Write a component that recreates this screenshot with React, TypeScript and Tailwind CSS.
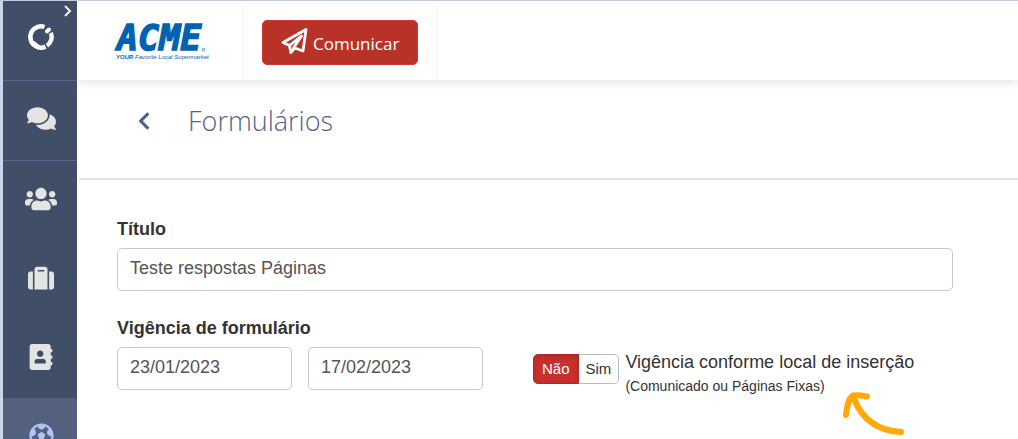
import {useState} from "react";
import {FaAddressBook, FaChevronLeft, FaComments, FaFutbol, FaSuitcase, FaUsers} from "react-icons/fa";

const menu = [
    {label: "Conversas", icon: FaComments, size: 29, style: "h-20 border-b border-[#566889] text-[#e4e4e4]"},
    {label: "Grupos", icon: FaUsers, size: 32, style: "h-[79px] text-[#e4e4e4]"},
    {label: "Viagens", icon: FaSuitcase, size: 26, style: "h-[79px] text-[#e4e4e4]"},
    {label: "Contatos", icon: FaAddressBook, size: 26, style: "h-[79px] text-[#e4e4e4]"},
    {label: "Esportes", icon: FaFutbol, size: 25, style: "h-[79px] bg-[#53617f] text-[#afc5f5]"},
];

const inputStyle =
    "h-[43px] w-full rounded-[5px] border border-[#c8c8c8] bg-white px-3 pb-0.5 text-lg text-[#555] outline-none";

const BrandMark = () => (
    <svg width="26" height="26" viewBox="0 0 26 26" fill="none" stroke="#fff">
        <path d="M16.500 3A10.600 10.600 0 1 0 17.500 22.600" strokeWidth="4.500"/>
        <path d="M19 21.700A10.600 10.600 0 0 0 22.800 8.800" strokeWidth="4.300"/>
        <path d="M19 7.300l2-1.800" strokeWidth="4" strokeLinecap="round"/>
        <path d="M6.500 18v4.500h5.500z" fill="#fff" strokeWidth="1.200"/>
    </svg>
);

const AcmeLogo = () => (
    <svg
        className="overflow-visible"
        width="92"
        height="40"
        viewBox="0 0 92 40"
        fill="#0062b1"
        role="img"
        aria-label="ACME"
    >
        <text
            x="2"
            y="29"
            fontFamily="'DejaVu Sans Mono', monospace"
            fontSize="35"
            fontWeight="700"
            fontStyle="italic"
            stroke="#0062b1"
            strokeWidth="1.400"
        >
            ACME
        </text>
        <circle cx="88.500" cy="28.500" r="1.300" fill="none" stroke="#0062b1" strokeWidth="0.700"/>
        <text x="1" y="38" fontFamily="'Liberation Sans', sans-serif" fontSize="6" fontStyle="italic">
            <tspan fontWeight="700">YOUR</tspan> Favorite Local Supermarket
        </text>
    </svg>
);

const PaperPlane = () => (
    <svg
        width="28"
        height="28"
        viewBox="0 0 28 28"
        fill="none"
        stroke="#fff"
        strokeWidth="2.800"
        strokeLinejoin="round"
        strokeLinecap="round"
    >
        <path d="M25 2.500L2 15.500l6.500 3 1.300 7 4-4.500 8.200 3z"/>
        <path d="M8.500 18.500L20.500 9 12.500 21"/>
    </svg>
);

const CurvedArrow = () => (
    <svg width="64" height="46" viewBox="0 0 64 46" fill="none" stroke="#ffa80a" strokeWidth="6" strokeLinecap="round">
        <path d="M59 41C38 40 21 30 12 8"/>
        <path d="M4 24C5 15 6 8 11 4.500 15 3.500 20 4.500 25 5.500" strokeLinejoin="round"/>
    </svg>
);

const Sidebar = () => (
    <aside className="relative z-10 w-[77px] shrink-0 overflow-hidden border-l-3 border-[#cbd5e8] bg-[#414e67]">
        <div className="relative flex h-20 items-center justify-center border-b border-[#566889] pb-2 pl-0.5">
            <a href="#inicio" aria-label="Início">
                <BrandMark/>
            </a>
            <button aria-label="Expandir menu" className="absolute right-1 top-1">
                <svg width="10" height="12" viewBox="0 0 10 12" fill="none" stroke="#f1f1f1" strokeWidth="2">
                    <path d="M2 1l5 5-5 5"/>
                </svg>
            </button>
        </div>
        <nav>
            {menu.map(({label, icon: Icon, size, style}) => (
                <a
                    key={label}
                    href="#menu"
                    aria-label={label}
                    className={`flex items-center justify-center pb-1 pl-0.5 ${style}`}
                >
                    <Icon size={size}/>
                </a>
            ))}
        </nav>
    </aside>
);

const Header = () => (
    <header className="flex h-[79px] shrink-0 shadow-[0_2px_10px_rgba(0,0,0,0.12)]">
        <div className="flex items-center border-r border-[#f5f5f5] pl-[38px] pr-[35px]">
            <AcmeLogo/>
        </div>
        <div className="flex items-center border-r border-[#f5f5f5] px-[19px]">
            <button className="mt-1 flex h-[45px] items-center gap-1 rounded-[5px] border border-[#d03a34] bg-[#b93228] px-[18px] text-[17px] text-white font-['Open_Sans',sans-serif]">
                <span className="pb-1">
                    <PaperPlane/>
                </span>
                <span className="pt-0.5">Comunicar</span>
            </button>
        </div>
    </header>
);

const App = () => {
    const [title, setTitle] = useState("Teste respostas Páginas");
    const [start, setStart] = useState("23/01/2023");
    const [end, setEnd] = useState("17/02/2023");
    const [followsPlace, setFollowsPlace] = useState(false);

    const optionStyle = (active: boolean) =>
        active
            ? "bg-[#c9302c] border-[#ac2925] text-white shadow-[inset_0_2px_5px_rgba(0,0,0,0.15)]"
            : "bg-white border-[#bbb] text-[#333]";

    return (
        <div className="flex h-screen overflow-hidden border-t border-[#c3cce0] bg-white font-['Liberation_Sans',Arial,sans-serif] text-[#333]">
            <Sidebar/>
            <div className="flex min-w-0 flex-1 flex-col">
                <Header/>
                <div className="ml-0.5 flex h-[100px] shrink-0 items-center gap-[34px] border-b-2 border-[#e2e2e2] pb-4 pl-[55px] text-[#52648a]">
                    <button aria-label="Voltar">
                        <FaChevronLeft size={20}/>
                    </button>
                    <h1 className="text-[27px] font-light font-['Open_Sans',sans-serif]">Formulários</h1>
                </div>
                <main className="flex flex-col gap-[23px] pl-10 pr-[65px] pt-[35px]">
                    <div className="flex flex-col">
                        <label htmlFor="titulo" className="pb-[5px] text-lg font-bold">Título</label>
                        <input
                            id="titulo"
                            className={inputStyle}
                            value={title}
                            onChange={(e) => setTitle(e.target.value)}
                        />
                    </div>
                    <div className="flex flex-col">
                        <label htmlFor="vigencia" className="pb-[5px] text-lg font-bold">Vigência de formulário</label>
                        <div className="flex items-start">
                            <div className="flex w-[366px] gap-4">
                                <input
                                    id="vigencia"
                                    className={inputStyle}
                                    value={start}
                                    onChange={(e) => setStart(e.target.value)}
                                />
                                <input
                                    aria-label="Fim da vigência"
                                    className={inputStyle}
                                    value={end}
                                    onChange={(e) => setEnd(e.target.value)}
                                />
                            </div>
                            <div className="ml-[50px] mt-[7px] flex h-[30px] text-[15px]">
                                <button
                                    aria-pressed={!followsPlace}
                                    onClick={() => setFollowsPlace(false)}
                                    className={`rounded-l-[5px] border px-2 ${optionStyle(!followsPlace)}`}
                                >
                                    Não
                                </button>
                                <button
                                    aria-pressed={followsPlace}
                                    onClick={() => setFollowsPlace(true)}
                                    className={`rounded-r-[5px] border border-l-0 px-[7px] ${optionStyle(followsPlace)}`}
                                >
                                    Sim
                                </button>
                            </div>
                            <div className="relative ml-1.5 mt-px">
                                <p className="text-lg">Vigência conforme local de inserção</p>
                                <p className="text-sm">(Comunicado ou Páginas Fixas)</p>
                                <div className="absolute left-[217px] top-[43px]">
                                    <CurvedArrow/>
                                </div>
                            </div>
                        </div>
                    </div>
                </main>
            </div>
        </div>
    );
};

export default App;
